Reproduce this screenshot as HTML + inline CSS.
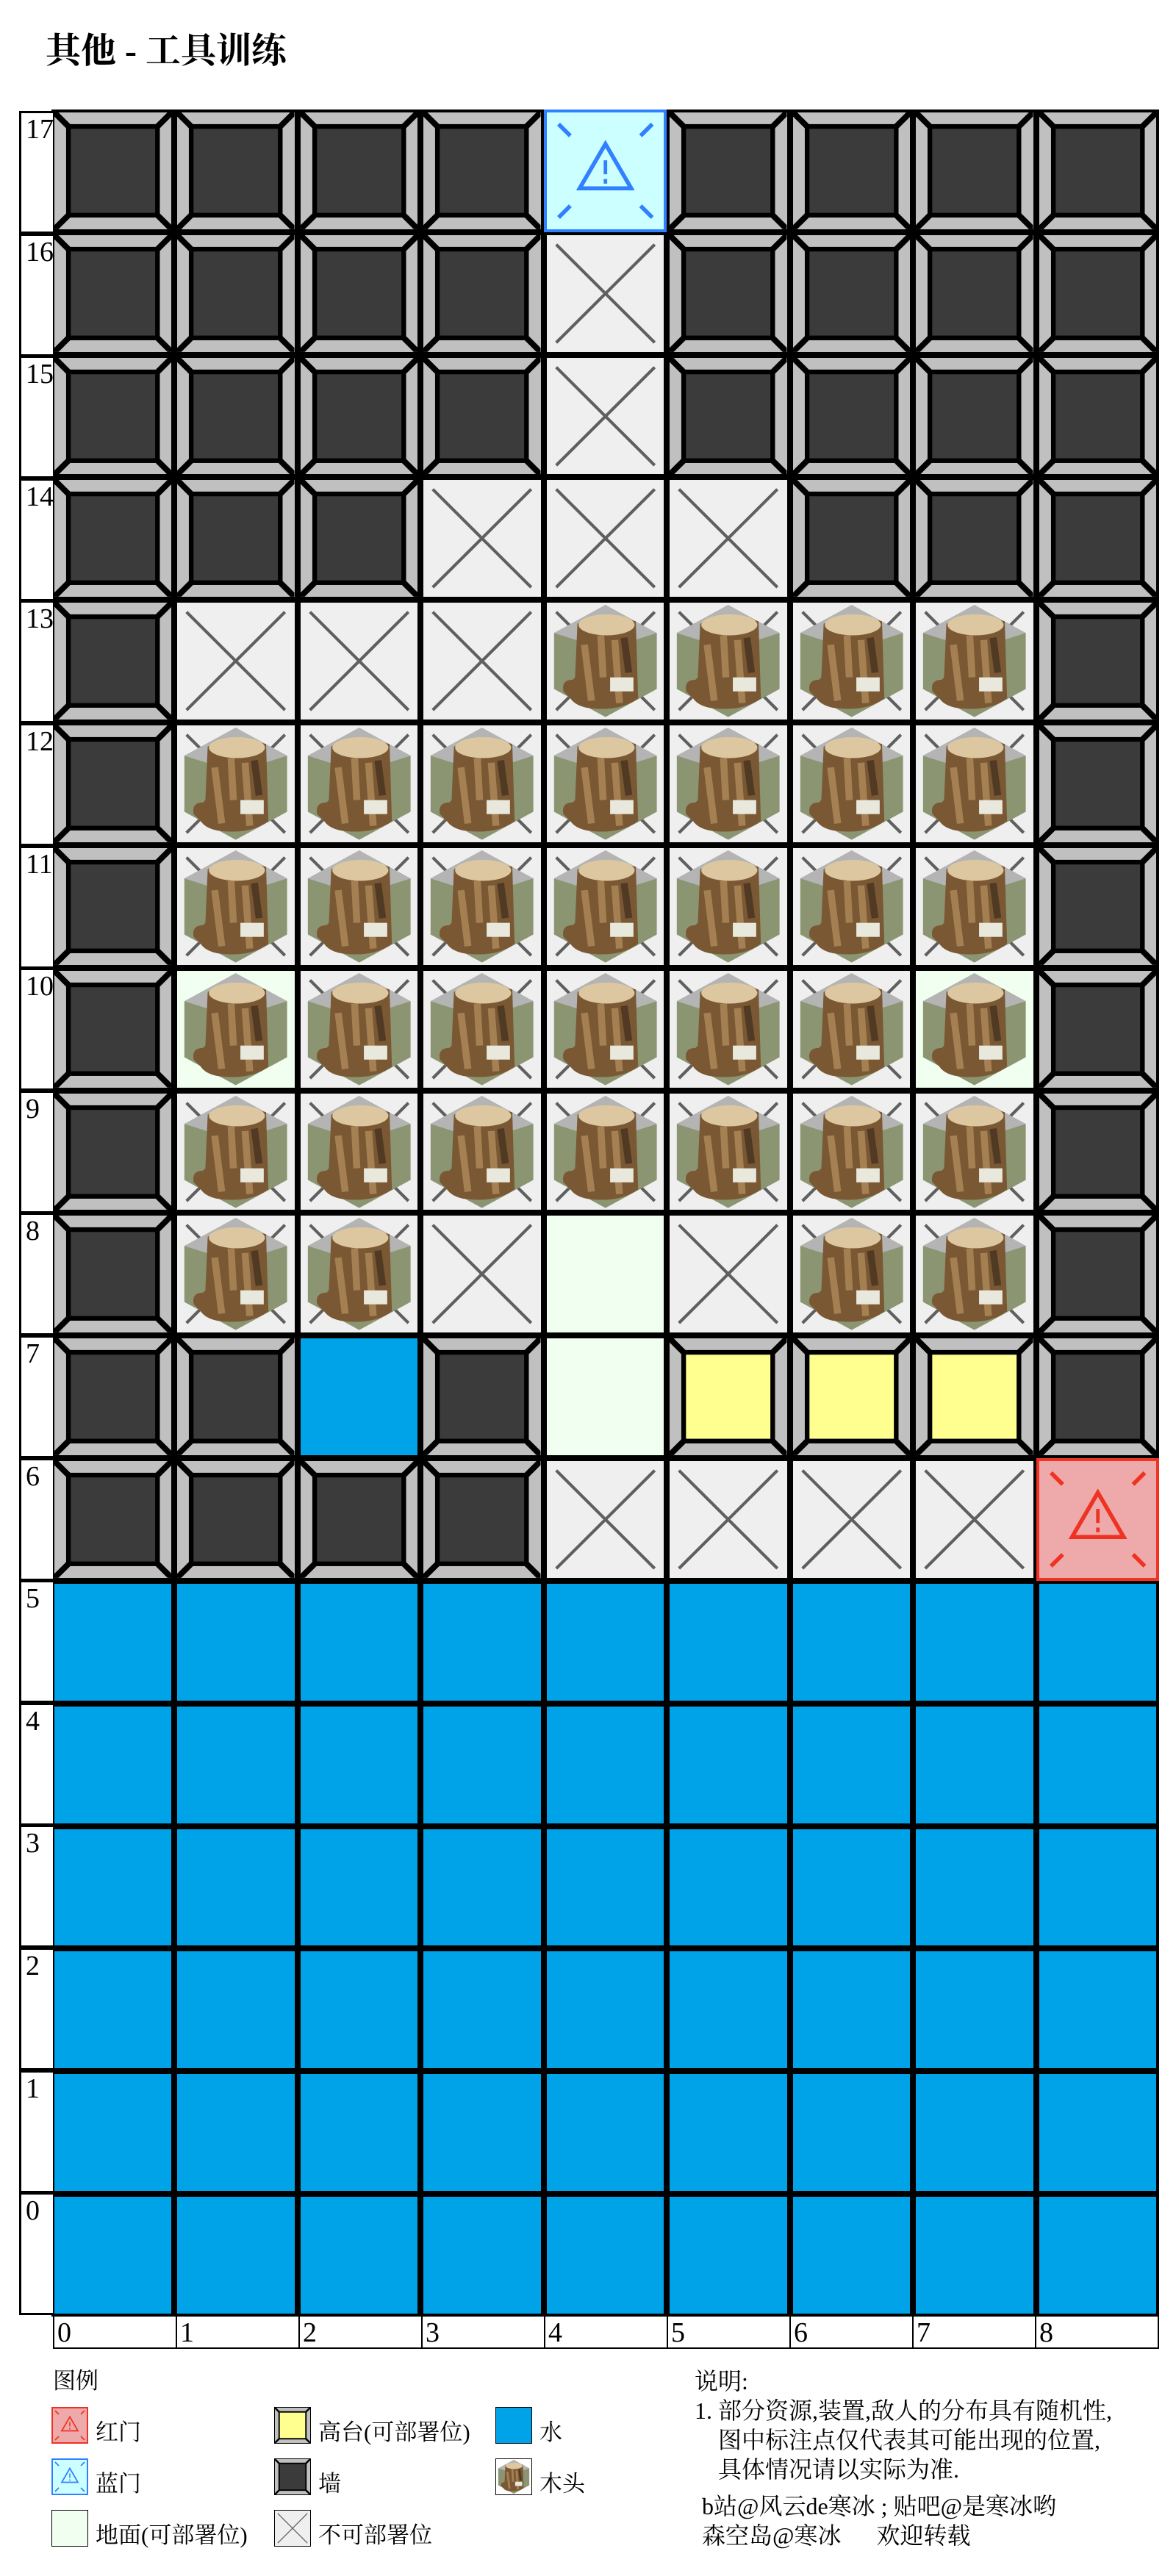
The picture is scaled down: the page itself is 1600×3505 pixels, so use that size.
<!DOCTYPE html>
<html><head><meta charset="utf-8">
<style>
*{box-sizing:border-box;margin:0;padding:0}
body{width:1600px;height:3505px;background:#fff;position:relative;overflow:hidden;font-family:"Liberation Serif","Noto Serif CJK SC",serif;color:#000}
.t{position:absolute;left:62px;top:40px;font-size:48px;line-height:60px;font-weight:bold}
.g{position:absolute;left:70px;top:149px;width:1507px;height:3003px;display:grid;grid-template-columns:repeat(9,1fr);grid-template-rows:repeat(18,1fr);background:#000}
.g>div{border:4px solid #000;position:relative}
.g svg{position:absolute;left:0;top:0;width:100%;height:100%;display:block}
.w{background:#c0c0c0}
.x{background:#efefef}
.wa{background:#00a2e8}
.gr{background:#f0fff0}
.y{background:#c0c0c0}
.b{background:#ccffff;outline:4px solid #3080ff;outline-offset:-4px}
.r{background:#eeaaaa;outline:4px solid #ee3322;outline-offset:-4px}
.lab{position:absolute;left:26px;width:46px;border:3px solid #000;border-right:none;background:#fff;font-size:38px;line-height:44px;padding-left:6px}
.bl{position:absolute;top:3150px;height:46px;border:2px solid #000;border-right:none;font-size:38px;line-height:44px;padding-left:4px;width:167px}
.lg{position:absolute;width:50px;height:50px}
.lt{position:absolute;font-size:31px;line-height:36px;font-family:"Liberation Serif","Noto Serif CJK SC",serif}
.ex{position:absolute;font-size:32px;line-height:40px;white-space:nowrap}
</style></head><body>
<svg width="0" height="0" style="position:absolute">
<defs>
<symbol id="wl" viewBox="0 0 100 100" preserveAspectRatio="none">
<rect x="0" y="0" width="100" height="100" fill="#c0c0c0"/>
<rect x="12" y="12" width="76" height="76" fill="#3b3b3b" stroke="#000" stroke-width="4"/>
<path d="M0 0L12 12M100 0L88 12M0 100L12 88M100 100L88 88" stroke="#000" stroke-width="5"/>
</symbol>
<symbol id="yl" viewBox="0 0 100 100" preserveAspectRatio="none">
<rect x="0" y="0" width="100" height="100" fill="#c0c0c0"/>
<rect x="12" y="12" width="76" height="76" fill="#ffff90" stroke="#000" stroke-width="4"/>
<path d="M0 0L12 12M100 0L88 12M0 100L12 88M100 100L88 88" stroke="#000" stroke-width="5"/>
</symbol>
<symbol id="xx" viewBox="0 0 100 100" preserveAspectRatio="none">
<path d="M8 8L92 92M92 8L8 92" stroke="#5f5f5f" stroke-width="2.6"/>
</symbol>
<symbol id="wd" viewBox="0 0 100 100">
<polygon points="50,2 94,26 94,74 50,98 6,74 6,26" fill="#8b9572"/>
<polygon points="50,2 94,26 50,40 6,26" fill="#b4b4b4"/>
<path d="M26 18 Q50 8 76 16 L78 82 Q62 94 34 90 Q24 88 20 82 L14 76 Q12 66 22 66 L24 64 Z" fill="#7a5834"/>
<path d="M32 36 L38 84 M58 32 L62 86 M46 28 L48 64" stroke="#b08a5a" stroke-width="6" opacity=".8"/>
<path d="M66 30 L70 60" stroke="#3f2e1e" stroke-width="6" opacity=".7"/>
<ellipse cx="51" cy="19" rx="24" ry="9" fill="#dcc7a0"/>
<rect x="54" y="64" width="20" height="12" fill="#e8e8dc"/>
</symbol>
<symbol id="bd" viewBox="0 0 100 100" preserveAspectRatio="none">
<path d="M10 10L20 20M90 10L80 20M10 90L20 80M90 90L80 80" stroke="#3080ff" stroke-width="3.5"/>
<path d="M50 27L72 65H28Z" fill="none" stroke="#3080ff" stroke-width="3.5"/>
<path d="M50 41V53M50 57V61" stroke="#3080ff" stroke-width="3"/>
</symbol>
<symbol id="rd" viewBox="0 0 100 100" preserveAspectRatio="none">
<path d="M10 10L20 20M90 10L80 20M10 90L20 80M90 90L80 80" stroke="#ee3322" stroke-width="3.5"/>
<path d="M50 27L72 65H28Z" fill="none" stroke="#ee3322" stroke-width="3.5"/>
<path d="M50 41V53M50 57V61" stroke="#ee3322" stroke-width="3"/>
</symbol>
</defs></svg>

<div class="t">其他 - 工具训练</div>

<div class="g">
<!-- 17 -->
<div class="w"><svg><use href="#wl"/></svg></div><div class="w"><svg><use href="#wl"/></svg></div><div class="w"><svg><use href="#wl"/></svg></div><div class="w"><svg><use href="#wl"/></svg></div><div class="b"><svg><use href="#bd"/></svg></div><div class="w"><svg><use href="#wl"/></svg></div><div class="w"><svg><use href="#wl"/></svg></div><div class="w"><svg><use href="#wl"/></svg></div><div class="w"><svg><use href="#wl"/></svg></div>
<!-- 16 -->
<div class="w"><svg><use href="#wl"/></svg></div><div class="w"><svg><use href="#wl"/></svg></div><div class="w"><svg><use href="#wl"/></svg></div><div class="w"><svg><use href="#wl"/></svg></div><div class="x"><svg><use href="#xx"/></svg></div><div class="w"><svg><use href="#wl"/></svg></div><div class="w"><svg><use href="#wl"/></svg></div><div class="w"><svg><use href="#wl"/></svg></div><div class="w"><svg><use href="#wl"/></svg></div>
<!-- 15 -->
<div class="w"><svg><use href="#wl"/></svg></div><div class="w"><svg><use href="#wl"/></svg></div><div class="w"><svg><use href="#wl"/></svg></div><div class="w"><svg><use href="#wl"/></svg></div><div class="x"><svg><use href="#xx"/></svg></div><div class="w"><svg><use href="#wl"/></svg></div><div class="w"><svg><use href="#wl"/></svg></div><div class="w"><svg><use href="#wl"/></svg></div><div class="w"><svg><use href="#wl"/></svg></div>
<!-- 14 -->
<div class="w"><svg><use href="#wl"/></svg></div><div class="w"><svg><use href="#wl"/></svg></div><div class="w"><svg><use href="#wl"/></svg></div><div class="x"><svg><use href="#xx"/></svg></div><div class="x"><svg><use href="#xx"/></svg></div><div class="x"><svg><use href="#xx"/></svg></div><div class="w"><svg><use href="#wl"/></svg></div><div class="w"><svg><use href="#wl"/></svg></div><div class="w"><svg><use href="#wl"/></svg></div>
<!-- 13 -->
<div class="w"><svg><use href="#wl"/></svg></div><div class="x"><svg><use href="#xx"/></svg></div><div class="x"><svg><use href="#xx"/></svg></div><div class="x"><svg><use href="#xx"/></svg></div><div class="x"><svg><use href="#xx"/></svg><svg><use href="#wd"/></svg></div><div class="x"><svg><use href="#xx"/></svg><svg><use href="#wd"/></svg></div><div class="x"><svg><use href="#xx"/></svg><svg><use href="#wd"/></svg></div><div class="x"><svg><use href="#xx"/></svg><svg><use href="#wd"/></svg></div><div class="w"><svg><use href="#wl"/></svg></div>
<!-- 12 -->
<div class="w"><svg><use href="#wl"/></svg></div><div class="x"><svg><use href="#xx"/></svg><svg><use href="#wd"/></svg></div><div class="x"><svg><use href="#xx"/></svg><svg><use href="#wd"/></svg></div><div class="x"><svg><use href="#xx"/></svg><svg><use href="#wd"/></svg></div><div class="x"><svg><use href="#xx"/></svg><svg><use href="#wd"/></svg></div><div class="x"><svg><use href="#xx"/></svg><svg><use href="#wd"/></svg></div><div class="x"><svg><use href="#xx"/></svg><svg><use href="#wd"/></svg></div><div class="x"><svg><use href="#xx"/></svg><svg><use href="#wd"/></svg></div><div class="w"><svg><use href="#wl"/></svg></div>
<!-- 11 -->
<div class="w"><svg><use href="#wl"/></svg></div><div class="x"><svg><use href="#xx"/></svg><svg><use href="#wd"/></svg></div><div class="x"><svg><use href="#xx"/></svg><svg><use href="#wd"/></svg></div><div class="x"><svg><use href="#xx"/></svg><svg><use href="#wd"/></svg></div><div class="x"><svg><use href="#xx"/></svg><svg><use href="#wd"/></svg></div><div class="x"><svg><use href="#xx"/></svg><svg><use href="#wd"/></svg></div><div class="x"><svg><use href="#xx"/></svg><svg><use href="#wd"/></svg></div><div class="x"><svg><use href="#xx"/></svg><svg><use href="#wd"/></svg></div><div class="w"><svg><use href="#wl"/></svg></div>
<!-- 10 -->
<div class="w"><svg><use href="#wl"/></svg></div><div class="gr"><svg><use href="#wd"/></svg></div><div class="x"><svg><use href="#xx"/></svg><svg><use href="#wd"/></svg></div><div class="x"><svg><use href="#xx"/></svg><svg><use href="#wd"/></svg></div><div class="x"><svg><use href="#xx"/></svg><svg><use href="#wd"/></svg></div><div class="x"><svg><use href="#xx"/></svg><svg><use href="#wd"/></svg></div><div class="x"><svg><use href="#xx"/></svg><svg><use href="#wd"/></svg></div><div class="gr"><svg><use href="#wd"/></svg></div><div class="w"><svg><use href="#wl"/></svg></div>
<!-- 9 -->
<div class="w"><svg><use href="#wl"/></svg></div><div class="x"><svg><use href="#xx"/></svg><svg><use href="#wd"/></svg></div><div class="x"><svg><use href="#xx"/></svg><svg><use href="#wd"/></svg></div><div class="x"><svg><use href="#xx"/></svg><svg><use href="#wd"/></svg></div><div class="x"><svg><use href="#xx"/></svg><svg><use href="#wd"/></svg></div><div class="x"><svg><use href="#xx"/></svg><svg><use href="#wd"/></svg></div><div class="x"><svg><use href="#xx"/></svg><svg><use href="#wd"/></svg></div><div class="x"><svg><use href="#xx"/></svg><svg><use href="#wd"/></svg></div><div class="w"><svg><use href="#wl"/></svg></div>
<!-- 8 -->
<div class="w"><svg><use href="#wl"/></svg></div><div class="x"><svg><use href="#xx"/></svg><svg><use href="#wd"/></svg></div><div class="x"><svg><use href="#xx"/></svg><svg><use href="#wd"/></svg></div><div class="x"><svg><use href="#xx"/></svg></div><div class="gr"></div><div class="x"><svg><use href="#xx"/></svg></div><div class="x"><svg><use href="#xx"/></svg><svg><use href="#wd"/></svg></div><div class="x"><svg><use href="#xx"/></svg><svg><use href="#wd"/></svg></div><div class="w"><svg><use href="#wl"/></svg></div>
<!-- 7 -->
<div class="w"><svg><use href="#wl"/></svg></div><div class="w"><svg><use href="#wl"/></svg></div><div class="wa"></div><div class="w"><svg><use href="#wl"/></svg></div><div class="gr"></div><div class="y"><svg><use href="#yl"/></svg></div><div class="y"><svg><use href="#yl"/></svg></div><div class="y"><svg><use href="#yl"/></svg></div><div class="w"><svg><use href="#wl"/></svg></div>
<!-- 6 -->
<div class="w"><svg><use href="#wl"/></svg></div><div class="w"><svg><use href="#wl"/></svg></div><div class="w"><svg><use href="#wl"/></svg></div><div class="w"><svg><use href="#wl"/></svg></div><div class="x"><svg><use href="#xx"/></svg></div><div class="x"><svg><use href="#xx"/></svg></div><div class="x"><svg><use href="#xx"/></svg></div><div class="x"><svg><use href="#xx"/></svg></div><div class="r"><svg><use href="#rd"/></svg></div>
<!-- 5..0 -->
<div class="wa"></div><div class="wa"></div><div class="wa"></div><div class="wa"></div><div class="wa"></div><div class="wa"></div><div class="wa"></div><div class="wa"></div><div class="wa"></div>
<div class="wa"></div><div class="wa"></div><div class="wa"></div><div class="wa"></div><div class="wa"></div><div class="wa"></div><div class="wa"></div><div class="wa"></div><div class="wa"></div>
<div class="wa"></div><div class="wa"></div><div class="wa"></div><div class="wa"></div><div class="wa"></div><div class="wa"></div><div class="wa"></div><div class="wa"></div><div class="wa"></div>
<div class="wa"></div><div class="wa"></div><div class="wa"></div><div class="wa"></div><div class="wa"></div><div class="wa"></div><div class="wa"></div><div class="wa"></div><div class="wa"></div>
<div class="wa"></div><div class="wa"></div><div class="wa"></div><div class="wa"></div><div class="wa"></div><div class="wa"></div><div class="wa"></div><div class="wa"></div><div class="wa"></div>
<div class="wa"></div><div class="wa"></div><div class="wa"></div><div class="wa"></div><div class="wa"></div><div class="wa"></div><div class="wa"></div><div class="wa"></div><div class="wa"></div>
</div>

<div class="lab" style="top:151px;height:167px">17</div>
<div class="lab" style="top:318px;height:167px">16</div>
<div class="lab" style="top:484px;height:167px">15</div>
<div class="lab" style="top:651px;height:167px">14</div>
<div class="lab" style="top:817px;height:167px">13</div>
<div class="lab" style="top:984px;height:167px">12</div>
<div class="lab" style="top:1151px;height:167px">11</div>
<div class="lab" style="top:1317px;height:167px">10</div>
<div class="lab" style="top:1484px;height:167px">9</div>
<div class="lab" style="top:1650px;height:167px">8</div>
<div class="lab" style="top:1817px;height:167px">7</div>
<div class="lab" style="top:1984px;height:167px">6</div>
<div class="lab" style="top:2150px;height:167px">5</div>
<div class="lab" style="top:2317px;height:167px">4</div>
<div class="lab" style="top:2483px;height:167px">3</div>
<div class="lab" style="top:2650px;height:167px">2</div>
<div class="lab" style="top:2817px;height:167px">1</div>
<div class="lab" style="top:2983px;height:167px">0</div>

<div class="bl" style="left:72px">0</div>
<div class="bl" style="left:239px">1</div>
<div class="bl" style="left:406px">2</div>
<div class="bl" style="left:573px">3</div>
<div class="bl" style="left:740px">4</div>
<div class="bl" style="left:907px">5</div>
<div class="bl" style="left:1074px">6</div>
<div class="bl" style="left:1241px">7</div>
<div class="bl" style="left:1408px;width:169px;border-right:2px solid #000">8</div>

<div class="lt" style="left:72px;top:3222px">图例</div>
<div class="lg r" style="left:70px;top:3275px;outline-width:2px;outline-offset:-2px"><svg width="50" height="50" style="position:absolute;left:0;top:0"><use href="#rd"/></svg></div>
<div class="lt" style="left:130px;top:3292px">红门</div>
<div class="lg" style="left:373px;top:3275px;border:1px solid #000"><svg width="48" height="48" style="position:absolute;left:0;top:0"><use href="#yl"/></svg></div>
<div class="lt" style="left:433px;top:3292px">高台(可部署位)</div>
<div class="lg" style="left:674px;top:3275px;background:#00a2e8;border:1px solid #000"></div>
<div class="lt" style="left:734px;top:3292px">水</div>

<div class="lg b" style="left:70px;top:3345px;outline-width:2px;outline-offset:-2px"><svg width="50" height="50" style="position:absolute;left:0;top:0"><use href="#bd"/></svg></div>
<div class="lt" style="left:130px;top:3362px">蓝门</div>
<div class="lg" style="left:373px;top:3345px;border:1px solid #000"><svg width="48" height="48" style="position:absolute;left:0;top:0"><use href="#wl"/></svg></div>
<div class="lt" style="left:433px;top:3362px">墙</div>
<div class="lg" style="left:674px;top:3345px;border:1px solid #000;background:#fff"><svg width="48" height="48" style="position:absolute;left:0;top:0"><use href="#wd"/></svg></div>
<div class="lt" style="left:734px;top:3362px">木头</div>

<div class="lg" style="left:70px;top:3415px;background:#f0fff0;border:1px solid #000"></div>
<div class="lt" style="left:130px;top:3432px">地面(可部署位)</div>
<div class="lg" style="left:373px;top:3415px;background:#efefef;border:1px solid #000"><svg width="48" height="48" style="position:absolute;left:0;top:0"><use href="#xx"/></svg></div>
<div class="lt" style="left:433px;top:3432px">不可部署位</div>

<div class="ex" style="left:945px;top:3220px">说明:</div>
<div class="ex" style="left:945px;top:3260px">1. 部分资源,装置,敌人的分布具有随机性,</div>
<div class="ex" style="left:977px;top:3300px">图中标注点仅代表其可能出现的位置,</div>
<div class="ex" style="left:977px;top:3340px">具体情况请以实际为准.</div>
<div class="ex" style="left:955px;top:3390px">b站@风云de寒冰 ; 贴吧@是寒冰哟</div>
<div class="ex" style="left:955px;top:3430px">森空岛@寒冰&nbsp;&nbsp;&nbsp;&nbsp;&nbsp;&nbsp;欢迎转载</div>
</body></html>
